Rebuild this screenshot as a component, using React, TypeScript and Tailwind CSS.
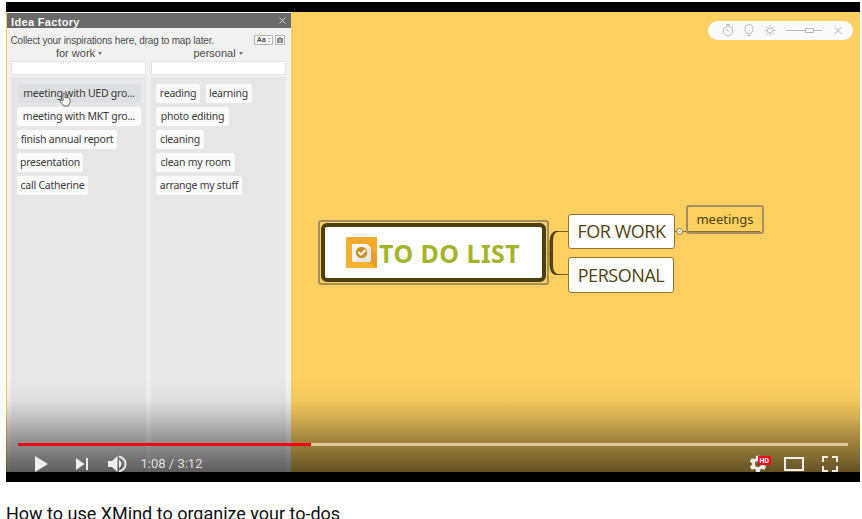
import React from "react";

function Tag({ children, className = "" }: { children: React.ReactNode; className?: string }) {
  return (
    <div className={`h-[19px] shrink-0 whitespace-nowrap rounded-[2px] bg-[#fafafa] text-center font-['Noto_Sans',sans-serif] text-[10.5px] leading-[19px] tracking-[-0.24px] text-[#3b3b3b] ${className}`}>
      {children}
    </div>
  );
}

function IdeaFactory() {
  return (
    <aside className="relative ml-px flex h-[460px] w-[283.5px] shrink-0 flex-col bg-[#f1f1f1] font-['Liberation_Sans',Arial,sans-serif] text-[#4c4c4c]">
      <header className="mt-px flex h-[15px] shrink-0 items-start justify-between overflow-hidden bg-[#696969] pl-[4px] pr-[5px] text-[#f7f7f7]">
        <h2 className="text-[11px] font-bold leading-[19px] tracking-[0.33px]">Idea Factory</h2>
        <svg className="mt-[4px]" width="7" height="7" viewBox="0 0 7 7" stroke="#d5d5d5" strokeWidth="1"><path d="M.5.5l6 6m0-6l-6 6" /></svg>
      </header>
      <div className="flex h-[18px] shrink-0 items-end justify-between pl-[3.5px] pr-[5.5px]">
        <p className="whitespace-nowrap text-[10px] leading-[11px] tracking-[-0.18px]">Collect your inspirations here, drag to map later.</p>
        <div className="flex gap-[2px] pb-px">
          <div className="flex h-[10px] w-[19px] items-center justify-center gap-[2px] border border-[#b5b5b5] bg-[#fafafa] text-[7px] font-bold">Aa <span>:</span></div>
          <div className="flex h-[10px] w-[10px] items-center justify-center border border-[#b5b5b5] bg-[#fafafa]">
            <svg width="6" height="6" viewBox="0 0 6 6"><path d="M0 1h6v5H0zM2 0h2v1H2z" fill="#888" /><path d="M2.500 2h1v3h-1z" fill="#eee" /></svg>
          </div>
        </div>
      </div>
      <div className="flex h-[15px] shrink-0 pl-[4px] text-[11px] leading-[13px]">
        <div className="flex w-[140px] items-center justify-center gap-[3px] pb-px pr-[4px]">for work <i className="border-x-[2.5px] border-t-[3px] border-x-transparent border-t-[#777]" /></div>
        <div className="flex w-[134px] items-center justify-center gap-[3px] pb-px">personal <i className="border-x-[2.5px] border-t-[3px] border-x-transparent border-t-[#777]" /></div>
      </div>
      <div className="flex gap-[5px] pl-[4px]">
        <div className="h-[14px] w-[135px] border border-[#e3e3e3] bg-white" />
        <div className="h-[14px] w-[135px] border border-[#e3e3e3] bg-white" />
      </div>
      <div className="mt-[2px] flex min-h-0 flex-1 gap-[5px] pl-[4px]">
        <div className="flex w-[135px] flex-col items-start gap-[4.1px] bg-[#e7e7e7] pl-[6px] pt-[6.8px]">
          <Tag className="w-[124px] bg-[#dedfe2]!">meeting with UED gro...</Tag>
          <Tag className="w-[124px]">meeting with MKT gro...</Tag>
          <Tag className="w-[100px]">finish annual report</Tag>
          <Tag className="w-[66px]">presentation</Tag>
          <Tag className="w-[71px]">call Catherine</Tag>
        </div>
        <div className="flex w-[135px] flex-col items-start gap-[4.1px] bg-[#e7e7e7] pl-[5px] pt-[6.8px]">
          <div className="flex gap-[5.5px]"><Tag className="w-[44px]">reading</Tag><Tag className="w-[46px]">learning</Tag></div>
          <Tag className="w-[73px]">photo editing</Tag>
          <Tag className="w-[48px]">cleaning</Tag>
          <Tag className="w-[79px]">clean my room</Tag>
          <Tag className="w-[86px]">arrange my stuff</Tag>
        </div>
      </div>
      <svg className="absolute left-[52px] top-[80px]" width="12" height="15" viewBox="0 0 12 15" fill="#fff" stroke="#555" strokeWidth=".9" strokeLinejoin="round">
        <path d="M4 9V2Q5 0 6 2v4q1-1 2 0 1-1 2 0 1 0 1 1v4l-2 3H5L1 9q-1-2 1-1z" />
      </svg>
    </aside>
  );
}

function PresentationBar() {
  return (
    <div className="absolute left-[702px] top-[9px] flex h-[19px] w-[145px] items-center rounded-full bg-[#fafafa]">
      <svg width="145" height="19" viewBox="0 0 145 19" fill="none" stroke="#b6b6b6" strokeWidth="1">
        <circle cx="20" cy="10" r="4.700" /><path d="M20 5V3.500m-2 0h4M18 8l2.500 2.500M24 5l1 1" />
        <path d="M39.300 12.700Q36.800 10 36.800 7.800a4.200 4.200 0 0 1 8.400 0q0 2.200-2.500 4.900zM39.500 14.500h3" />
        <circle cx="62" cy="9.500" r="2.600" />
        <path d="M62 4v2m0 7v2m-5.500-5.500h2m7 0h2M58 5.500l1.500 1.500m5 5 1.500 1.500M66 5.500 64.500 7m-5 5L58 13.500" />
        <path d="M78 9.500h19.500m8 0h8.500M97.500 7.500h8v4h-8zM126.500 6l7 7m0-7l-7 7" />
      </svg>
    </div>
  );
}

function MindMap() {
  return (
    <div className="absolute inset-0 font-['Noto_Sans',sans-serif] text-[#51420f]">
      <svg className="absolute left-[540px] top-[210px]" width="30" height="60" viewBox="0 0 30 60" fill="none" stroke="#51420f">
        <path d="M22 9.500H10M22 52.500H10" strokeWidth=".8" />
        <path d="M1 31.500h3" strokeWidth=".6" />
        <path d="M14 9H9Q4 11 3.500 19v24q.5 9 6 10h5v-1h-3Q7 51 7 43V19q0-8 4-9z" fill="#51420f" stroke="none" />
      </svg>
      <div className="absolute left-[312px] top-[208px] flex h-[65px] w-[231px] rounded-[3px] border-2 border-[#a28e5f] p-px">
        <div className="flex flex-1 items-center rounded-[6px] border-[4px] border-[#4c4010] bg-white pl-[20.5px]">
          <svg width="31" height="31" viewBox="0 0 31 31" className="shrink-0">
            <path d="M0 0h31v31H0z" fill="#f2a92e" /><path d="M0 0l7 7v17l-7 7z" fill="#f7b032" /><path d="M0 31l8-7h17l6 7z" fill="#fbb32d" /><path d="M25 11l6 6v14l-8-6z" fill="#e59f28" />
            <path d="M6 7h15l4 4v12q0 2-2 2H8q-2 0-2-2z" fill="#f8f8f8" /><path d="M21 11h4v12q0 2-2 2H8z" fill="#e6e7ea" />
            <circle cx="15.500" cy="15.500" r="5.700" fill="#cf8e20" /><path d="M12.500 15l2.500 2.500 4.500-4.500" fill="none" stroke="white" strokeWidth="2" />
          </svg>
          <span className="ml-[2.5px] whitespace-nowrap pt-px text-[25px] font-bold leading-none tracking-[0.45px] text-[#a5b52b]">TO DO LIST</span>
        </div>
      </div>
      <div className="absolute left-[562px] top-[202px] flex h-[35px] w-[107px] items-center justify-center whitespace-nowrap rounded-[3px] border border-[#92762e] bg-white font-['Open_Sans',sans-serif] text-[18px] tracking-[-0.45px]">FOR WORK</div>
      <div className="absolute left-[562px] top-[245px] flex h-[36px] w-[106px] items-center justify-center whitespace-nowrap rounded-[3px] border border-[#92762e] bg-white font-['Open_Sans',sans-serif] text-[18px] tracking-[-0.45px]">PERSONAL</div>
      <svg className="absolute left-[668px] top-[214px]" width="90" height="12" viewBox="0 0 90 12" fill="none" stroke="#8b7130"><path d="M1 5.500h2m5 0h78" /><circle cx="5.500" cy="5.500" r="3" fill="white" /><path d="M4 5.500h3" strokeWidth=".5" /></svg>
      <div className="absolute left-[680px] top-[193px] flex h-[29px] w-[78px] items-center justify-center rounded-[3px] border-2 border-[#a28e5f] text-[13px]">meetings</div>
    </div>
  );
}

function PlayerControls() {
  return (
    <div className="absolute inset-x-0 bottom-0 flex h-[92px] flex-col justify-end bg-[linear-gradient(to_bottom,rgba(0,0,0,0)_0%,rgba(0,0,0,0.04)_22%,rgba(0,0,0,0.14)_38%,rgba(0,0,0,0.32)_60%,rgba(0,0,0,0.6)_100%)] px-[12px]">
      <div className="h-[3px] shrink-0 bg-[#dcc99b]"><div className="h-full w-[293px] bg-[#ff0014]" /></div>
      <div className="flex h-[26px] shrink-0 overflow-hidden">
        <svg className="shrink-0" width="110" height="26" viewBox="0 0 110 26" fill="#eee">
          <path d="M17 10l13 8-13 8zM58 12l8.500 6-8.500 6zM68 12h2v12h-2zM90 15h4l5.500-5v16l-5.500-5h-4z" />
          <path d="M101 13.500q5 4.500 0 9z" /><path d="M101 10.500q6.500 2 6.500 7.500t-6.500 7.500" fill="none" stroke="#eee" strokeWidth="2" />
        </svg>
        <time className="ml-[12.500px] pt-[10px] font-[Roboto,sans-serif] text-[13px] leading-[15px] text-[#ddd]">1:08 / 3:12</time>
        <svg className="ml-auto" width="98" height="26" viewBox="0 0 98 26">
          <g transform="translate(8 18)" fill="#eeece6">
            <circle r="4.500" fill="none" stroke="#eeece6" strokeWidth="3" />
            {[0, 60, 120, 180, 240, 300].map((a) => <path key={a} d="M-1.800-8.300h3.600l.8 3.500h-5.200z" transform={`rotate(${a})`} />)}
          </g>
          <rect x="8" y="10" width="13" height="9" rx="1" fill="#f6051c" /><text x="9.500" y="17" fill="white" fontFamily="Roboto" fontWeight="700" fontSize="7">HD</text>
          <path d="M35 12h18v12H35zM73 16v-5h5m4 0h5v5m0 4v5h-5m-4 0h-5v-5" fill="none" stroke="#f0eee8" strokeWidth="2" />
        </svg>
      </div>
    </div>
  );
}

export default function App() {
  return (
    <main className="h-[519px] w-[862px] overflow-hidden bg-white">
      <div className="ml-[6px] w-[854px] pt-[2px]">
        <section className="h-[480px] bg-black py-[10px]">
          <div className="relative flex h-[460px] overflow-hidden bg-[#fccf61]"><IdeaFactory /><MindMap /><PresentationBar /><PlayerControls /></div>
        </section>
        <h1 className="mt-[21px] whitespace-nowrap font-[Roboto,sans-serif] text-[18px] leading-[21px] text-[#111]">How to use XMind to organize your to-dos</h1>
      </div>
    </main>
  );
}
